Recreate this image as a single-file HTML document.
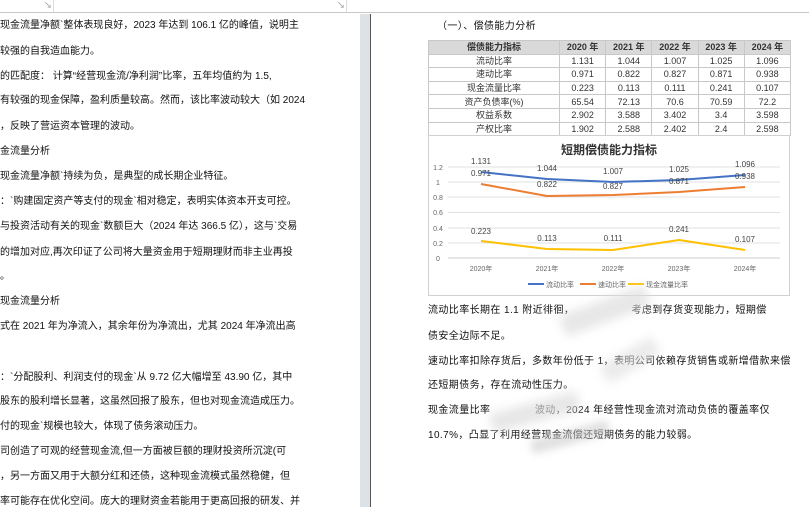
<!DOCTYPE html>
<html><head><meta charset="utf-8"><style>
*{margin:0;padding:0;box-sizing:border-box}
body{width:809px;height:507px;overflow:hidden;background:#fff;position:relative;font-family:"Liberation Sans","Noto Sans CJK SC",sans-serif;color:#111}
.top{position:absolute;left:0;top:0;width:809px;height:13px;border-bottom:1px solid #c8c8c8;background:#fff}
.gap{position:absolute;left:360px;top:14px;width:11px;height:493px;background:#dde2e6;border-right:1px solid #555}
.l{position:absolute;white-space:nowrap;font-size:10px;letter-spacing:0px;line-height:14px}
.r{position:absolute;white-space:nowrap;font-size:10px;letter-spacing:0.4px;line-height:14px}
table{position:absolute;left:428px;top:40px;width:363px;border-collapse:collapse;font-size:9px;color:#333}
td{border:1px solid #c8c8c8;height:13.6px;text-align:center;padding:0;line-height:12px}
tr.h td{background:#d9d9d9;font-weight:bold}
.chart{position:absolute;left:428px;top:135px;width:362px;height:161px;border:1px solid #d0d0d0}
</style></head><body>
<div class="top"><span style="position:absolute;left:44px;top:0;font-size:8px;color:#888">↘</span><span style="position:absolute;left:337px;top:0;font-size:8px;color:#888">↘</span><div style="position:absolute;left:53px;top:0;width:1px;height:12px;background:#ddd"></div><div style="position:absolute;left:346px;top:0;width:1px;height:12px;background:#ddd"></div></div>
<div class="gap"></div>

<div class="l" style="left:0;top:19px">现金流量净额`整体表现良好，2023 年达到 106.1 亿的峰值，说明主</div>
<div class="l" style="left:0;top:45px">较强的自我造血能力。</div>
<div class="l" style="left:0;top:70px">的匹配度： 计算“经营现金流/净利润”比率，五年均值約为 1.5,</div>
<div class="l" style="left:0;top:94px">有较强的现金保障，盈利质量较高。然而，该比率波动较大（如 2024</div>
<div class="l" style="left:0;top:120px">，反映了营运资本管理的波动。</div>
<div class="l" style="left:0;top:145px">金流量分析</div>
<div class="l" style="left:0;top:170px">现金流量净额`持续为负，是典型的成长期企业特征。</div>
<div class="l" style="left:0;top:195px">：`购建固定资产等支付的现金`相对稳定，表明实体资本开支可控。</div>
<div class="l" style="left:0;top:220px">与投资活动有关的现金`数额巨大（2024 年达 366.5 亿），这与`交易</div>
<div class="l" style="left:0;top:246px">的增加对应,再次印证了公司将大量资金用于短期理财而非主业再投</div>
<div class="l" style="left:0;top:270px">。</div>
<div class="l" style="left:0;top:295px">现金流量分析</div>
<div class="l" style="left:0;top:320px">式在 2021 年为净流入，其余年份为净流出，尤其 2024 年净流出高</div>
<div class="l" style="left:0;top:371px">：`分配股利、利润支付的现金`从 9.72 亿大幅增至 43.90 亿，其中</div>
<div class="l" style="left:0;top:395px">股东的股利增长显著，这虽然回报了股东，但也对现金流造成压力。</div>
<div class="l" style="left:0;top:420px">付的现金`规模也较大，体现了债务滚动压力。</div>
<div class="l" style="left:0;top:445px">司创造了可观的经营现金流,但一方面被巨额的理财投资所沉淀(可</div>
<div class="l" style="left:0;top:470px">，另一方面又用于大额分红和还债，这种现金流模式虽然稳健，但</div>
<div class="l" style="left:0;top:495px">率可能存在优化空间。庞大的理财资金若能用于更高回报的研发、并</div>

<div class="r" style="left:437px;top:20px">（一）、偿债能力分析</div>
<table>
<tr class="h"><td style="width:131px">偿债能力指标</td><td>2020 年</td><td>2021 年</td><td>2022 年</td><td>2023 年</td><td>2024 年</td></tr>
<tr><td>流动比率</td><td>1.131</td><td>1.044</td><td>1.007</td><td>1.025</td><td>1.096</td></tr>
<tr><td>速动比率</td><td>0.971</td><td>0.822</td><td>0.827</td><td>0.871</td><td>0.938</td></tr>
<tr><td>现金流量比率</td><td>0.223</td><td>0.113</td><td>0.111</td><td>0.241</td><td>0.107</td></tr>
<tr><td>资产负债率(%)</td><td>65.54</td><td>72.13</td><td>70.6</td><td>70.59</td><td>72.2</td></tr>
<tr><td>权益系数</td><td>2.902</td><td>3.588</td><td>3.402</td><td>3.4</td><td>3.598</td></tr>
<tr><td>产权比率</td><td>1.902</td><td>2.588</td><td>2.402</td><td>2.4</td><td>2.598</td></tr>
</table>
<div class="chart"></div>
<svg style="position:absolute;left:0;top:0" width="809" height="507" font-family="Liberation Sans, Noto Sans CJK SC, sans-serif">
<text x="609" y="154" font-size="12" font-weight="bold" text-anchor="middle" fill="#333">短期偿债能力指标</text>
<g stroke="#e0e0e0" stroke-width="1">
<line x1="448" y1="167" x2="780" y2="167"/><line x1="448" y1="182" x2="780" y2="182"/><line x1="448" y1="197" x2="780" y2="197"/><line x1="448" y1="212.5" x2="780" y2="212.5"/><line x1="448" y1="228" x2="780" y2="228"/><line x1="448" y1="243" x2="780" y2="243"/><line x1="448" y1="258" x2="780" y2="258" stroke="#ccc"/></g>
<g font-size="7" fill="#666" text-anchor="middle">
<text x="438" y="170">1.2</text><text x="438" y="185">1</text><text x="438" y="200">0.8</text><text x="438" y="215">0.6</text><text x="438" y="231">0.4</text><text x="438" y="246">0.2</text><text x="438" y="261">0</text>
<text x="481" y="271">2020年</text><text x="547" y="271">2021年</text><text x="613" y="271">2022年</text><text x="679" y="271">2023年</text><text x="745" y="271">2024年</text></g>
<g fill="none" stroke-width="2" stroke-linejoin="round">
<polyline stroke="#4472c4" points="481,172 547,179 613,182 679,180 745,175"/>
<polyline stroke="#ed7d31" points="481,184 547,196 613,195 679,192 745,187"/>
<polyline stroke="#ffc000" points="481,241 547,249 613,250 679,240 745,250"/></g>
<g font-size="8" fill="#444" text-anchor="middle">
<text x="481" y="164">1.131</text><text x="481" y="176">0.971</text>
<text x="547" y="171">1.044</text><text x="547" y="187">0.822</text>
<text x="613" y="174">1.007</text><text x="613" y="189">0.827</text>
<text x="679" y="172">1.025</text><text x="679" y="184">0.871</text>
<text x="745" y="167">1.096</text><text x="745" y="179">0.938</text>
<text x="481" y="234">0.223</text><text x="547" y="241">0.113</text><text x="613" y="241">0.111</text><text x="679" y="232">0.241</text><text x="745" y="242">0.107</text></g>
<g font-size="7" fill="#666">
<line x1="528" y1="284" x2="544" y2="284" stroke="#4472c4" stroke-width="2"/><text x="546" y="287">流动比率</text>
<line x1="580" y1="284" x2="596" y2="284" stroke="#ed7d31" stroke-width="2"/><text x="598" y="287">速动比率</text>
<line x1="628" y1="284" x2="644" y2="284" stroke="#ffc000" stroke-width="2"/><text x="646" y="287">现金流量比率</text></g>
</svg>

<div class="r" style="left:428px;top:304px">流动比率长期在 1.1 附近徘徊，&nbsp;&nbsp;&nbsp;&nbsp;&nbsp;&nbsp;&nbsp;&nbsp;&nbsp;&nbsp;&nbsp;&nbsp;&nbsp;&nbsp;&nbsp;&nbsp;&nbsp;&nbsp;考虑到存货变现能力，短期偿</div>
<div class="r" style="left:428px;top:330px">债安全边际不足。</div>
<div class="r" style="left:428px;top:355px">速动比率扣除存货后，多数年份低于 1，表明公司依赖存货销售或新增借款来偿</div>
<div class="r" style="left:428px;top:379px">还短期债务，存在流动性压力。</div>
<div class="r" style="left:428px;top:404px">现金流量比率&nbsp;&nbsp;&nbsp;&nbsp;&nbsp;&nbsp;&nbsp;&nbsp;&nbsp;&nbsp;&nbsp;&nbsp;&nbsp;&nbsp;波动，2024 年经营性现金流对流动负债的覆盖率仅</div>
<div class="r" style="left:428px;top:429px">10.7%，凸显了利用经营现金流偿还短期债务的能力较弱。</div>
<div style="position:absolute;left:560px;top:300px;width:90px;height:22px;background:#ddd;filter:blur(5px);opacity:.7;transform:rotate(-20deg)"></div>
<div style="position:absolute;left:600px;top:350px;width:60px;height:20px;background:#ddd;filter:blur(5px);opacity:.6;transform:rotate(-30deg)"></div>
<div style="position:absolute;left:490px;top:402px;width:90px;height:20px;background:#ddd;filter:blur(5px);opacity:.7;transform:rotate(-15deg)"></div>
<div style="position:absolute;left:530px;top:430px;width:80px;height:14px;background:#ccc;filter:blur(4px);opacity:.6;transform:rotate(-15deg)"></div>
</body></html>
